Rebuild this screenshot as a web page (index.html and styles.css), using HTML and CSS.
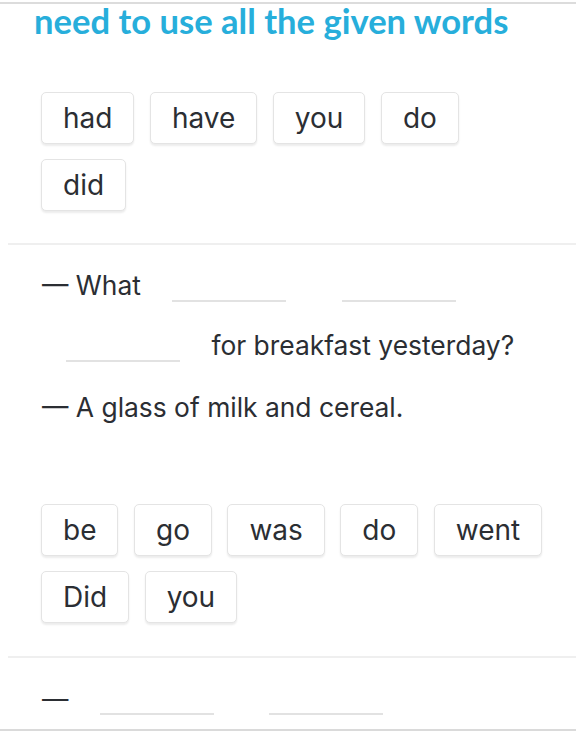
FILE: index.html
```html
<!DOCTYPE html>
<html lang="en">
<head>
<meta charset="utf-8">
<title>Exercise</title>
<link rel="stylesheet" href="styles.css">
</head>
<body>
<div class="page">
  <div class="top-rule"></div>
  <section class="intro">
    <h2 class="title">need to use all the given words</h2>
    <div class="chips chips-a">
      <span class="chip">had</span>
      <span class="chip">have</span>
      <span class="chip">you</span>
      <span class="chip">do</span>
      <span class="chip">did</span>
    </div>
  </section>
  <hr class="sep">
  <section class="question">
    <p class="line">— What <span class="blank"></span> <span class="blank"></span> <span class="blank"></span> for breakfast yesterday?</p>
    <p class="line line-answer">— A glass of milk and cereal.</p>
    <div class="chips chips-b">
      <span class="chip">be</span>
      <span class="chip">go</span>
      <span class="chip">was</span>
      <span class="chip">do</span>
      <span class="chip">went</span>
      <span class="chip">Did</span>
      <span class="chip">you</span>
    </div>
  </section>
  <hr class="sep sep-b">
  <section class="question question-last">
    <p class="line">— <span class="blank"></span> <span class="blank"></span></p>
  </section>
  <div class="bottom-rule"></div>
</div>
</body>
</html>
```

FILE: styles.css
```css
html, body {
  margin: 0;
  padding: 0;
  background: #ffffff;
}

.page {
  width: 576px;
  height: 743px;
  overflow: hidden;
  font-family: Inter, "Open Sans", "Liberation Sans", sans-serif;
  color: #2b2e33;
}

.top-rule {
  margin-top: 2px;
  height: 2px;
  background: #dcdcdc;
}

.intro {
  padding-left: 34px;
}

.title {
  margin: 2px 0 0;
  font-family: Lato, "Open Sans", sans-serif;
  font-weight: 700;
  font-size: 34.6px;
  line-height: 30px;
  color: #27aedb;
  white-space: nowrap;
}

.chips {
  display: flex;
  flex-wrap: wrap;
  gap: 15px 15.5px;
  max-width: 510px;
}

.chips-a {
  margin-top: 56px;
  margin-left: 7px;
}

.chip {
  box-sizing: border-box;
  height: 52px;
  padding: 0 21px;
  display: inline-flex;
  align-items: center;
  border: 1px solid #e4e4e4;
  border-radius: 5px;
  box-shadow: 0 2px 2px rgba(0, 0, 0, 0.08);
  background: #fff;
  font-size: 28px;
  color: #2b2e33;
}

.sep {
  margin: 32px 0 0 8px;
  height: 2px;
  border: 0;
  background: #efefef;
}

.question {
  padding: 10px 0 0 42px;
}

.line {
  margin: 0;
  font-size: 26.4px;
  line-height: 60px;
}

.line-answer {
  margin-top: 2px;
}

.blank {
  display: inline-block;
  width: 114px;
  height: 0;
  margin: 0 24px;
  border-bottom: 2px solid #e2e2e2;
  vertical-align: -7px;
}

.chips-b {
  margin-top: 67px;
  margin-left: -1px;
}

.sep-b {
  margin-top: 33px;
}

.question-last {
  height: 61px;
}

.bottom-rule {
  height: 2px;
  background: #dadada;
}
```
